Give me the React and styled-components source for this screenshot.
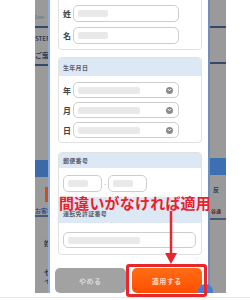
import React from 'react'
import styled, { createGlobalStyle } from 'styled-components'

const GlobalStyle = createGlobalStyle`
  body {
    margin: 0;
    background: #fff;
    font-family: "Noto Sans CJK JP", "Noto Sans", sans-serif;
  }
`

const Page = styled.div`
  position: relative;
  width: 250px;
  height: 300px;
  overflow: hidden;
  background: #fff;
`

const Screen = styled.div`
  position: relative;
  display: flex;
  margin-left: 35px;
  width: 191px;
  height: 293px;
  overflow: hidden;
  background: #9b9b9b;
`

const BottomRule = styled.div`
  margin-top: 4px;
  height: 1px;
  background: #e6e6e6;
`

// dimmed page behind the modal
const Strip = styled.div`
  display: flex;
  flex-direction: column;
  width: ${p => p.$w}px;
  flex-shrink: 0;
  background: #9a9a9a;
  ${p => p.$edge && `border-left: 2px solid #6f8fbd;`}
`

const Gap = styled.div`
  height: ${p => p.$h}px;
  flex-shrink: 0;
`

const Rule = styled.div`
  height: 2px;
  background: ${p => p.$c || '#34496b'};
  flex-shrink: 0;
`

const DimText = styled.div`
  height: ${p => p.$h || 9}px;
  font-size: ${p => p.$size || 6}px;
  line-height: ${p => p.$h || 9}px;
  font-weight: 700;
  color: ${p => p.$c || '#2e3d58'};
  white-space: nowrap;
  overflow: hidden;
  padding-left: ${p => p.$indent || 0}px;
  flex-shrink: 0;
`

const Block = styled.div`
  height: ${p => p.$h}px;
  width: ${p => p.$w || 'auto'};
  margin-left: ${p => p.$ml || 0}px;
  background: ${p => p.$c};
  flex-shrink: 0;
`

const Modal = styled.div`
  width: 160px;
  flex-shrink: 0;
  background: #fff;
  border-left: 2px solid #8eaedb;
  padding: 0 6px 0 8px;
  box-sizing: border-box;
  display: flex;
  flex-direction: column;
`

const Card = styled.div`
  margin-top: ${p => p.$mt}px;
  border: 1px solid #e1e1e1;
  border-radius: 4px;
  background: #fff;
  overflow: hidden;
  flex-shrink: 0;
`

const CardHeader = styled.div`
  display: flex;
  align-items: ${p => (p.$bottom ? 'flex-end' : 'center')};
  height: ${p => p.$h}px;
  margin-top: ${p => p.$mt || 0}px;
  padding: 0 0 ${p => (p.$bottom ? 5 : 0)}px 4px;
  box-sizing: border-box;
  background: #dde8f5;
  font-size: 6px;
  font-weight: 700;
  color: #58606b;
  letter-spacing: 0.3px;
`

const Rows = styled.div`
  display: flex;
  flex-direction: column;
  gap: ${p => p.$gap}px;
  padding: ${p => p.$pt}px 4px ${p => p.$pb}px;
`

const Row = styled.div`
  display: flex;
  align-items: center;
`

const Label = styled.div`
  width: 10px;
  font-size: 8px;
  font-weight: 700;
  color: #444;
`

const Field = styled.div`
  display: flex;
  align-items: center;
  justify-content: space-between;
  width: ${p => p.$w}px;
  height: ${p => p.$h}px;
  box-sizing: border-box;
  border: 1px solid #cdcdcd;
  border-radius: 5px;
  padding: 0 5px 0 4px;
  background: #fff;
`

const Placeholder = styled.div`
  width: ${p => p.$w}px;
  height: 7px;
  border-radius: 2px;
  background: #e9e9e9;
`

const Chevron = styled.div`
  width: 7px;
  height: 7px;
  border-radius: 50%;
  background: #8a8a8a;
  display: flex;
  align-items: center;
  justify-content: center;
`

const Dash = styled.div`
  width: 6px;
  text-align: center;
  font-size: 6px;
  color: #999;
`

const Buttons = styled.div`
  display: flex;
  gap: 6px;
  margin: 13px 0 0 -3px;
`

const Button = styled.div`
  width: 71px;
  height: 25px;
  border-radius: 5px;
  display: flex;
  align-items: center;
  justify-content: center;
  font-size: 7px;
  font-weight: 700;
  letter-spacing: 0.5px;
  color: ${p => (p.$primary ? '#ffd9c4' : '#d9d9d9')};
  background: ${p => (p.$primary ? 'linear-gradient(#ff6d16, #ff4e00)' : '#a2a2a2')};
`

const Fab = styled.div`
  position: absolute;
  left: 163px;
  top: 284px;
  width: 15px;
  height: 15px;
  border-radius: 50%;
  background: #3f7fdc;
  color: #fff;
  font-size: 7px;
  text-align: center;
  line-height: 10px;
`

// red annotations drawn over the screenshot
const Note = styled.div`
  position: absolute;
  left: 59px;
  top: 193px;
  font-size: 15px;
  line-height: 20px;
  font-weight: 700;
  letter-spacing: 0.2px;
  color: #e8212b;
  white-space: nowrap;
`

const Arrow = styled.svg`
  position: absolute;
  left: 164px;
  top: 211px;
`

const Highlight = styled.div`
  position: absolute;
  left: 126px;
  top: 264px;
  width: 81px;
  height: 33px;
  box-sizing: border-box;
  border: 3px solid #ea262d;
  border-radius: 3px;
`

function Select () {
  return (
    <Field $w={106} $h={16}>
      <Placeholder $w={62} />
      <Chevron>
        <svg width='5' height='4' viewBox='0 0 5 4'>
          <path d='M0.8 1 L2.5 2.8 L4.2 1' stroke='#fff' strokeWidth='1' fill='none' />
        </svg>
      </Chevron>
    </Field>
  )
}

export default function App () {
  return (
    <Page>
      <GlobalStyle />
      <Screen>
        <Strip $w={13}>
          <Gap $h={14} />
          <DimText $h={7} $size={4} $c='#5b6678'>ｴﾝﾄﾘｰ</DimText>
          <Gap $h={5} />
          <Rule />
          <Gap $h={6} />
          <DimText>STEP</DimText>
          <Gap $h={8} />
          <DimText $size={7}>ご案内</DimText>
          <Gap $h={4} />
          <Rule />
          <Gap $h={94} />
          <Block $h={17} $c='#3b6aa6' />
          <Gap $h={10} />
          <Block $h={15} $w='3px' $ml={10} $c='#c9501c' />
          <Gap $h={5} />
          <DimText $h={8} $c='#33508a'>お客様</DimText>
          <Rule $c='#46597a' />
          <Gap $h={22} />
          <DimText $size={7} $indent={9}>姓</DimText>
          <Gap $h={20} />
          <DimText $size={7} $indent={9}>セ</DimText>
          <DimText $size={7} $indent={9}>イ</DimText>
        </Strip>

        <Modal>
          <Card $mt={-5}>
            <Rows $gap={5} $pt={9} $pb={5}>
              <Row><Label>姓</Label><Field $w={106} $h={17}><Placeholder $w={30} /></Field></Row>
              <Row><Label>名</Label><Field $w={106} $h={17}><Placeholder $w={30} /></Field></Row>
            </Rows>
          </Card>

          <Card $mt={7}>
            <CardHeader $h={18}>生年月日</CardHeader>
            <Rows $gap={4} $pt={6} $pb={4}>
              <Row><Label>年</Label><Select /></Row>
              <Row><Label>月</Label><Select /></Row>
              <Row><Label>日</Label><Select /></Row>
            </Rows>
          </Card>

          <Card $mt={9}>
            <CardHeader $h={15}>郵便番号</CardHeader>
            <Rows $gap={0} $pt={7} $pb={0}>
              <Row>
                <Field $w={39} $h={17}><Placeholder $w={20} /></Field>
                <Dash>-</Dash>
                <Field $w={39} $h={17}><Placeholder $w={20} /></Field>
              </Row>
            </Rows>
            <CardHeader $h={26} $mt={5} $bottom>運転免許証番号</CardHeader>
            <Rows $gap={0} $pt={9} $pb={6}>
              <Row><Field $w={133} $h={16}><Placeholder $w={72} /></Field></Row>
            </Rows>
          </Card>

          <Buttons>
            <Button>やめる</Button>
            <Button $primary>適用する</Button>
          </Buttons>
        </Modal>

        <Strip $w={18} $edge>
          <Gap $h={26} />
          <Rule />
          <Gap $h={34} />
          <Rule />
          <Gap $h={94} />
          <Block $h={17} $c='#3d70b2' />
          <Gap $h={11} />
          <DimText $h={8} $size={6} $indent={3}>反</DimText>
          <Gap $h={12} />
          <DimText $h={9} $size={5} $indent={1} $c='#5a2a2a'>谷通</DimText>
          <Gap $h={3} />
          <Rule $c='#46597a' />
        </Strip>

        <Fab>^</Fab>
      </Screen>
      <BottomRule />

      <Note>間違いがなければ適用</Note>
      <Arrow width='14' height='54' viewBox='0 0 14 54'>
        <line x1='7' y1='0' x2='7' y2='44' stroke='#ea262d' strokeWidth='2.5' />
        <polygon points='1,42 13,42 7,53' fill='#ea262d' />
      </Arrow>
      <Highlight />
    </Page>
  )
}
